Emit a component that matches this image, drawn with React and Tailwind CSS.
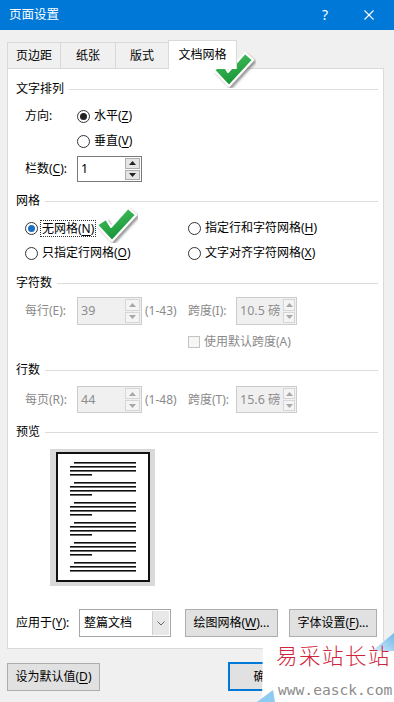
import React from "react";

function U({ children }) {
  return <span className="underline underline-offset-[2px] decoration-[1px]">{children}</span>;
}

function Radio({ checked, blue }) {
  return (
    <span className="w-[13px] h-[13px] rounded-full border border-[#333333] bg-white flex items-center justify-center shrink-0">
      {checked ? (
        <span className={blue ? "w-[7px] h-[7px] rounded-full bg-[#1a6fc4]" : "w-[7px] h-[7px] rounded-full bg-[#222222]"} />
      ) : null}
    </span>
  );
}

function Header({ children }) {
  return (
    <div className="h-[18px] flex items-center gap-[5px] text-black">
      <span>{children}</span>
      <span className="flex-1 h-px bg-[#dcdcdc]" />
    </div>
  );
}

function Tri({ up, color }) {
  return (
    <svg width="7" height="4" viewBox="0 0 7 4">
      <polygon points={up ? "0,4 7,4 3.5,0" : "0,0 7,0 3.5,4"} fill={color} />
    </svg>
  );
}

function Spinner({ value, disabled, size, btnW }) {
  const box = disabled
    ? "flex border border-[#cccccc] bg-[#f0f0f0] text-[#8d8d8d]"
    : "flex border border-[#7a7a7a] bg-white text-black";
  const btn = disabled
    ? "flex-1 flex items-center justify-center border border-[#d6d6d6] bg-[#f4f4f4]"
    : "flex-1 flex items-center justify-center border border-[#adadad] bg-[#e5e5e5]";
  const ac = disabled ? "#a8a8a8" : "#222222";
  return (
    <div className={box + " " + size}>
      <div className="flex-1 min-w-0 flex items-center pl-[3px] text-[12.5px] whitespace-nowrap overflow-hidden">{value}</div>
      <div className={(btnW || "w-[17px]") + " shrink-0 flex flex-col gap-px p-px"}>
        <div className={btn}>
          <Tri up color={ac} />
        </div>
        <div className={btn}>
          <Tri color={ac} />
        </div>
      </div>
    </div>
  );
}

function Check({ id }) {
  return (
    <svg width="100%" height="100%" viewBox="0 0 42 36">
      <defs>
        <linearGradient id={"gg" + id} x1="0" y1="0" x2="0.4" y2="1">
          <stop offset="0" stopColor="#4cc764" />
          <stop offset="1" stopColor="#169236" />
        </linearGradient>
        <filter id={"sh" + id} x="-20%" y="-20%" width="150%" height="150%">
          <feDropShadow dx="2" dy="2" stdDeviation="1.2" floodColor="#555555" floodOpacity="0.6" />
        </filter>
      </defs>
      <polygon
        points="1,18 10,12 15,20 32,1 40,8 16,34"
        fill={"url(#gg" + id + ")"}
        stroke="#ffffff"
        strokeWidth="2"
        strokeLinejoin="round"
        filter={"url(#sh" + id + ")"}
      />
    </svg>
  );
}

function Btn({ children, className }) {
  return (
    <div className={"h-[28px] flex items-center justify-center bg-[#e1e1e1] border border-[#adadad] " + className}>
      {children}
    </div>
  );
}

export default function App() {
  const lineGroups = [10, 30, 50, 70, 90, 110];
  return (
    <div className="relative w-[394px] h-[702px] overflow-hidden bg-[#f0f0f0] font-['Noto_Sans','Noto_Sans_CJK_SC',sans-serif] text-[12px] leading-[16px] text-black">
      {/* Title bar */}
      <div className="h-[30px] bg-[#0078d7] flex items-center text-white">
        <span className="ml-[9px] text-[12.5px]">页面设置</span>
        <span className="ml-auto w-[14px] text-center text-[14px]">?</span>
        <svg className="ml-[32px] mr-[20px]" width="10" height="10" viewBox="0 0 10 10">
          <path d="M0.5 0.5 L9.5 9.5 M9.5 0.5 L0.5 9.5" stroke="#ffffff" strokeWidth="1.1" />
        </svg>
      </div>

      {/* Tabs */}
      <div className="relative z-10 mt-[10px] ml-[7px] h-[28px] flex items-end">
        <div className="w-[53px] h-[26px] border-l border-t border-[#d9d9d9] flex items-center justify-center">页边距</div>
        <div className="w-[55px] h-[26px] border-l border-t border-[#d9d9d9] flex items-center justify-center">纸张</div>
        <div className="w-[53px] h-[26px] border-l border-t border-[#d9d9d9] flex items-center justify-center">版式</div>
        <div className="w-[69px] h-[29px] -mb-px bg-white border-l border-r border-t border-[#d9d9d9] flex items-center justify-center">
          文档网格
        </div>
      </div>

      {/* Panel */}
      <div className="ml-[7px] w-[377px] h-[581px] bg-white border border-[#d9d9d9] pl-[8px] pr-[5px] pt-[11px] pb-[11px] flex flex-col">
        <Header>文字排列</Header>
        <div className="mt-[6px] h-[24px] flex items-center">
          <span className="ml-[9px] w-[52px]">方向:</span>
          <Radio checked />
          <span className="ml-[4px]">
            水平(<U>Z</U>)
          </span>
        </div>
        <div className="mt-[1px] h-[24px] flex items-center pl-[61px]">
          <Radio />
          <span className="ml-[4px]">
            垂直(<U>V</U>)
          </span>
        </div>
        <div className="mt-[3px] h-[26px] flex items-center">
          <span className="ml-[9px] w-[52px]">
            栏数(<U>C</U>):
          </span>
          <Spinner value="1" size="w-[65px] h-[26px]" />
        </div>

        <div className="mt-[10px]">
          <Header>网格</Header>
        </div>
        <div className="mt-[8px] h-[20px] flex items-center pl-[9px]">
          <div className="w-[163px] flex items-center">
            <Radio checked blue />
            <span className="ml-[2px] px-[1px] border border-dotted border-[#333333] leading-[15px]">
              无网格(<U>N</U>)
            </span>
          </div>
          <Radio />
          <span className="ml-[4px]">
            指定行和字符网格(<U>H</U>)
          </span>
        </div>
        <div className="mt-[5px] h-[20px] flex items-center pl-[9px]">
          <div className="w-[163px] flex items-center">
            <Radio />
            <span className="ml-[4px]">
              只指定行网格(<U>O</U>)
            </span>
          </div>
          <Radio />
          <span className="ml-[4px]">
            文字对齐字符网格(<U>X</U>)
          </span>
        </div>

        <div className="mt-[11px]">
          <Header>字符数</Header>
        </div>
        <div className="mt-[5px] h-[28px] flex items-center text-[#8a8a8a]">
          <span className="ml-[9px] w-[52px]">每行(E):</span>
          <Spinner value="39" disabled size="w-[65px] h-[28px]" />
          <span className="ml-[3px] w-[43px]">(1-43)</span>
          <span className="w-[48px]">跨度(I):</span>
          <Spinner value="10.5 磅" disabled size="w-[61px] h-[28px]" btnW="w-[14px]" />
        </div>
        <div className="mt-[8px] h-[18px] flex items-center pl-[172px] text-[#8a8a8a]">
          <span className="w-[12px] h-[12px] border border-[#c4c4c4] bg-[#f6f6f6]" />
          <span className="ml-[4px]">使用默认跨度(A)</span>
        </div>

        <div className="mt-[10px]">
          <Header>行数</Header>
        </div>
        <div className="mt-[7px] h-[27px] flex items-center text-[#8a8a8a]">
          <span className="ml-[9px] w-[52px]">每页(R):</span>
          <Spinner value="44" disabled size="w-[65px] h-[27px]" />
          <span className="ml-[3px] w-[43px]">(1-48)</span>
          <span className="w-[48px]">跨度(T):</span>
          <Spinner value="15.6 磅" disabled size="w-[61px] h-[27px]" btnW="w-[14px]" />
        </div>

        <div className="mt-[10px]">
          <Header>预览</Header>
        </div>
        <div className="mt-[8px] ml-[34px] w-[105px] h-[137px] bg-[#d9d9d9] pl-[6px] pr-[5px] pt-[3px] pb-[4px]">
          <div className="w-full h-full bg-white border-2 border-[#111111]">
            <svg width="90" height="126" viewBox="0 0 90 126">
              {lineGroups.map((y, i) => (
                <g key={i} fill="#111111">
                  <rect x="16" y={y - 2} width="62" height="1.6" />
                  <rect x="12" y={y + 2} width="66" height="1.6" />
                  <rect x="12" y={y + 6} width="66" height="1.6" />
                  {i < 5 ? <rect x="12" y={y + 10} width="22" height="1.6" /> : null}
                </g>
              ))}
            </svg>
          </div>
        </div>

        <div className="mt-[23px] h-[28px] flex items-center">
          <span className="w-[63px]">
            应用于(<U>Y</U>):
          </span>
          <div className="w-[92px] h-[28px] flex border border-[#a6a6a6] bg-white">
            <span className="flex-1 flex items-center pl-[4px]">整篇文档</span>
            <span className="w-[17px] m-px flex items-center justify-center bg-[#e8e8e8] border-l border-[#cfcfcf]">
              <svg width="8" height="5" viewBox="0 0 8 5">
                <path d="M0.5 0.5 L4 4 L7.5 0.5" stroke="#666666" fill="none" strokeWidth="1" />
              </svg>
            </span>
          </div>
          <Btn className="ml-[14px] w-[93px]">
            绘图网格(<U>W</U>)...
          </Btn>
          <Btn className="ml-[11px] w-[88px]">
            字体设置(<U>F</U>)...
          </Btn>
        </div>
      </div>

      {/* Bottom buttons */}
      <div className="mt-[13px] ml-[7px] flex items-center">
        <Btn className="w-[93px]">
          设为默认值(<U>D</U>)
        </Btn>
        <div className="ml-[128px] w-[75px] h-[29px] flex items-center justify-center bg-[#e1e1e1] border-2 border-[#0078d7]">确定</div>
        <Btn className="ml-[8px] w-[75px]">取消</Btn>
      </div>

      {/* Green check overlays */}
      <div className="absolute left-[212px] top-[52px] w-[44px] h-[36px]">
        <Check id="a" />
      </div>
      <div className="absolute left-[96px] top-[207px] w-[42px] h-[36px]">
        <Check id="b" />
      </div>

      {/* Watermark overlay */}
      <div className="absolute left-[255px] top-[630px] w-[139px] h-[72px]">
        <svg className="absolute inset-0" width="139" height="72" viewBox="0 0 139 72">
          <defs>
            <linearGradient id="wb" x1="1" y1="0" x2="0" y2="1">
              <stop offset="0" stopColor="#6fb8ea" />
              <stop offset="1" stopColor="#d8ecfa" />
            </linearGradient>
          </defs>
          <polygon points="8,11 139,11 139,72 7,72" fill="#ffffff" />
          <polygon points="117,21 139,3 139,21" fill="url(#wb)" />
          <polygon points="2,72 18,60 20,72" fill="#8ecbf0" />
        </svg>
        <div className="absolute left-[21px] top-[14px] text-[21.5px] leading-[22px] text-[#d0243b] tracking-[1.5px] font-['Noto_Sans_CJK_SC',sans-serif] font-light">
          易采站长站
        </div>
        <div className="absolute left-[23px] top-[52px] text-[14.6px] leading-[16px] text-[#8c8c8c] font-['DejaVu_Sans_Mono',monospace]">
          www.easck.com
        </div>
      </div>
    </div>
  );
}
